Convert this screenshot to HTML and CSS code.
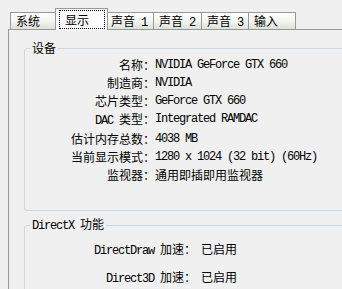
FILE: index.html
```html
<!DOCTYPE html>
<html lang="zh-CN">
<head>
    <meta charset="UTF-8">
    <title>DirectX 诊断工具</title>
    <link rel="stylesheet" href="styles.css">
</head>
<body>
    <div class="dialog">
        <!-- 选项卡 -->
        <div class="tabs">
            <div class="tab narrow">系统</div>
            <div class="tab active"><span class="focus">显示</span></div>
            <div class="tab">声音<span class="en"> 1</span></div>
            <div class="tab">声音<span class="en"> 2</span></div>
            <div class="tab narrow">声音<span class="en"> 3</span></div>
            <div class="tab narrow">输入</div>
        </div>

        <div class="panel">
            <!-- 设备 -->
            <fieldset class="group device">
                <legend>设备</legend>
                <div class="info">
                    <span class="label">名称：</span>
                    <span class="value en">NVIDIA GeForce GTX 660</span>
                    <span class="label">制造商：</span>
                    <span class="value en">NVIDIA</span>
                    <span class="label">芯片类型：</span>
                    <span class="value en">GeForce GTX 660</span>
                    <span class="label"><span class="en">DAC </span>类型：</span>
                    <span class="value en">Integrated RAMDAC</span>
                    <span class="label">估计内存总数：</span>
                    <span class="value en">4038 MB</span>
                    <span class="label">当前显示模式：</span>
                    <span class="value en">1280 x 1024 (32 bit) (60Hz)</span>
                    <span class="label">监视器：</span>
                    <span class="value">通用即插即用监视器</span>
                </div>
            </fieldset>

            <!-- DirectX 功能 -->
            <fieldset class="group dx">
                <legend><span class="en">DirectX </span>功能</legend>
                <div class="info">
                    <span class="label"><span class="en">DirectDraw </span>加速：</span>
                    <span class="value">已启用</span>
                    <span class="label"><span class="en">Direct3D </span>加速：</span>
                    <span class="value">已启用</span>
                </div>
            </fieldset>
        </div>
    </div>
</body>
</html>
```

FILE: styles.css
```css
/* 对话框基础样式 */
body {
    margin: 0;
    background: #f0f0f0;
    color: #000;
    font-family: "Noto Sans CJK SC", sans-serif;
    font-size: 12px;
}

.dialog {
    width: 342px;
    height: 289px;
    overflow: hidden;
}

.en {
    font-family: "Liberation Mono", monospace;
    letter-spacing: -1.2px;
}

/* 选项卡 */
.tabs {
    display: flex;
    align-items: flex-end;
    height: 29px;
    padding-left: 10px;
}

.tab {
    box-sizing: border-box;
    flex: none;
    width: 49px;
    height: 17px;
    margin-right: -1px;
    padding-left: 5px;
    border: 1px solid #919b9c;
    border-bottom: 0;
    background: linear-gradient(#fefefe, #f4f4f1 50%, #e0e0da);
    line-height: 16px;
    white-space: nowrap;
}

.tab.narrow {
    width: 48px;
}

.tab.active {
    position: relative;
    z-index: 1;
    width: 53px;
    height: 22px;
    margin: 0 -3px -1px -2px;
    padding: 1px 2px 0 3px;
    background: #fcfcfe;
}

.focus {
    display: block;
    height: 19px;
    box-sizing: border-box;
    padding-left: 5px;
    border: 1px dotted #000;
    line-height: 17px;
}

/* 面板 */
.panel {
    width: 400px;
    height: 300px;
    margin-left: 8px;
    padding: 11px 0 0 15px;
    border-top: 1px solid #919b9c;
    border-left: 1px solid #919b9c;
}

.group {
    margin: 0;
    padding: 1px 0 26px 5px;
    border: 1px solid #d0d7dc;
    border-radius: 3px;
}

.group legend {
    padding: 0 2px;
    line-height: 14px;
}

.info {
    display: grid;
    grid-template-columns: 125px auto;
    line-height: 18px;
}

.label {
    text-align: right;
    white-space: nowrap;
}

.value {
    white-space: nowrap;
}

.dx {
    margin-top: 6px;
    padding-top: 3px;
}

.dx .info {
    grid-template-columns: 166px auto;
    column-gap: 5px;
    line-height: 26px;
}
```
